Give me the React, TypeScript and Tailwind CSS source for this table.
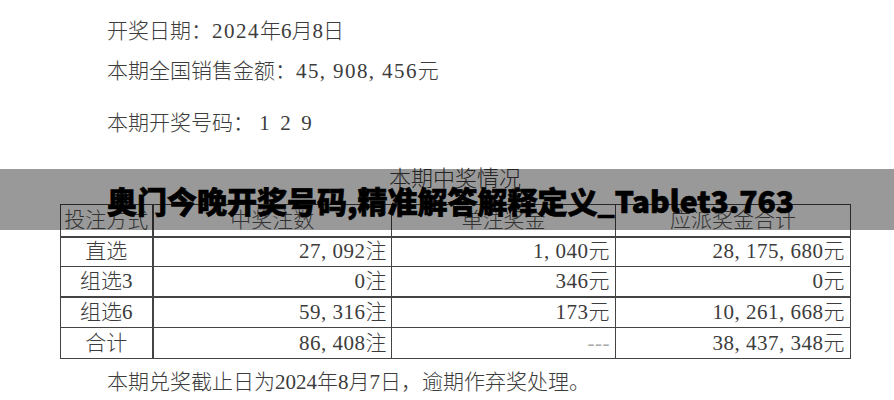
import React from "react";

const doc = {
  fontFamily: '"Liberation Serif", "Noto Sans CJK SC", serif',
};

const rows = [
  { name: "直选", count: "27, 092注", unit: "1, 040元", total: "28, 175, 680元", thick: false },
  { name: "组选3", count: "0注", unit: "346元", total: "0元", thick: true },
  { name: "组选6", count: "59, 316注", unit: "173元", total: "10, 261, 668元", thick: false },
  { name: "合计", count: "86, 408注", unit: "---", total: "38, 437, 348元", thick: false },
];

export default function App() {
  return (
    <div className="relative w-[894px] h-[400px] bg-white overflow-hidden text-[#3c3c3c]" style={doc}>
      <div className="flex flex-col pt-[11px]">
        <div className="pl-[107px] h-[40px] leading-[40px] text-[21px] font-light">
          开奖日期：<span className="tracking-[1.5px]">2024</span>年6月8日
        </div>
        <div className="pl-[107px] h-[40px] leading-[40px] text-[21px] font-light">
          本期全国销售金额：<span className="tracking-[1.4px]">45, 908, 456</span>元
        </div>
        <div className="pl-[107px] mt-[12px] h-[40px] leading-[40px] text-[21px] font-light flex">
          <span>本期开奖号码：</span>
          <span className="flex">
            <span className="w-[21px] text-center">1</span>
            <span className="w-[21px] text-center">2</span>
            <span className="w-[21px] text-center">9</span>
          </span>
        </div>
        <div className="mt-[16px] h-[40px] leading-[40px] text-[22px] font-light w-[790px] ml-[60px] text-center">本期中奖情况</div>
        <table className="ml-[60px] mt-[5px] w-[790px] table-fixed border-collapse text-[21px] font-light">
          <colgroup>
            <col className="w-[92px]" />
            <col className="w-[239px]" />
            <col className="w-[224px]" />
            <col className="w-[235px]" />
          </colgroup>
          <thead>
            <tr className="h-[32px]">
              <th className="font-light border border-[#444] border-r-2 border-b-2 text-center leading-none p-0 text-[#555]">投注方式</th>
              <th className="font-light border border-[#444] border-b-2 text-center leading-none p-0 text-[#555]">中奖注数</th>
              <th className="font-light border border-[#444] border-b-2 text-center leading-none p-0 text-[#555]">单注奖金</th>
              <th className="font-light border border-[#444] border-b-2 text-center leading-none p-0 text-[#555]">应派奖金合计</th>
            </tr>
          </thead>
          <tbody>
            {rows.map((r, i) => (
              <tr key={i} className={i < 2 ? "h-[30px]" : "h-[31px]"}>
                <td className={`border border-[#444] border-r-2 text-center leading-none p-0 ${r.thick ? "border-b-2" : ""}`}>{r.name}</td>
                <td className={`border border-[#444] text-right leading-none p-0 pr-[4px] tracking-[0.5px] ${r.thick ? "border-b-2" : ""}`}>{r.count}</td>
                <td className={`border border-[#444] text-right leading-none p-0 pr-[5px] tracking-[0.5px] ${r.thick ? "border-b-2" : ""} ${r.unit === "---" ? "text-[#aaa]" : ""}`}>{r.unit}</td>
                <td className={`border border-[#444] text-right leading-none p-0 pr-[5px] tracking-[0.5px] ${r.thick ? "border-b-2" : ""}`}>{r.total}</td>
              </tr>
            ))}
          </tbody>
        </table>
        <div className="pl-[107px] h-[40px] leading-[40px] mt-[3px] text-[21px] font-light">本期兑奖截止日为2024年8月7日，逾期作弃奖处理。</div>
      </div>
      <div className="absolute left-0 right-0 top-[169px] h-[61px] bg-black/40 flex items-center pl-[107px]">
        <span
          className="text-[30px] font-black text-black leading-none [-webkit-text-stroke:0.7px_black]"
          style={{ fontFamily: '"Noto Sans CJK SC", "Noto Sans", sans-serif' }}
        >
          奥门今晚开奖号码,精准解答解释定义_Tablet3.763
        </span>
      </div>
    </div>
  );
}
